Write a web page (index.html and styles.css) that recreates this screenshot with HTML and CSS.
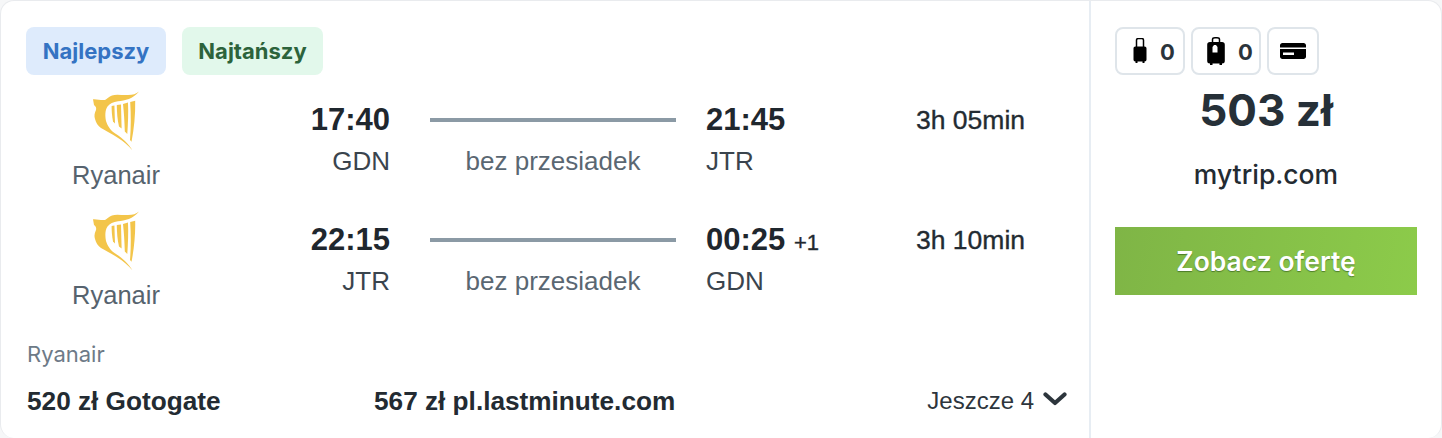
FILE: index.html
```html
<!DOCTYPE html>
<html lang="pl">
<head>
<meta charset="utf-8">
<title>Oferta lotu</title>
<link rel="stylesheet" href="styles.css">
</head>
<body>
<svg class="defs" width="0" height="0" aria-hidden="true">
  <symbol id="harp" viewBox="0 0 48 60">
    <path d="M47 .5C44 3 41 4 36 4C30 4.300 24 3 20 4.500C17 5.500 15 8 13 9C9 9.500 5 8 1 8.300L2 14C4 15.500 4.500 17 4 19C2.500 22 2 25 3 28C4 32 6 35 9 37C16 41 26 46 33 52C36 54.500 38.500 57 40.600 59.600C37 53 30 47 24 43C19 40 15.500 35 14 30C13 25 13 19 15.500 15.500C18 12.500 21 11 26 10.300C33 9.500 41 8 47 .5Z"/>
    <path d="M19.600 15L22.400 14.500L23 32.500L21 30.500C20 25 19.600 20 19.600 15Z"/>
    <path d="M24.800 14L29 13.500L29.600 37.500L27 35.500C25.500 29 24.800 21 24.800 14Z"/>
    <path d="M31 13L36 11.500C36.500 22 36 33 35.300 43L32.800 40.500C32.500 31 32 22 31 13Z"/>
    <path d="M38.200 11L43.200 9.800C43.500 24 42 38 39.500 50.800L38 49C39 37 39 24 38.200 11Z"/>
  </symbol>
</svg>
<main class="card">
  <section class="main">
    <div class="tags">
      <span class="tag tag-blue">Najlepszy</span>
      <span class="tag tag-green">Najtańszy</span>
    </div>
    <div class="leg">
      <div class="airline">
        <svg class="logo"><use href="#harp"/></svg>
        <span class="airline-name">Ryanair</span>
      </div>
      <div class="grid">
        <span class="time end">17:40</span>
        <span class="line"></span>
        <span class="time">21:45</span>
        <span class="duration">3h 05min</span>
        <span class="code end">GDN</span>
        <span class="stops">bez przesiadek</span>
        <span class="code">JTR</span>
      </div>
    </div>
    <div class="leg">
      <div class="airline">
        <svg class="logo"><use href="#harp"/></svg>
        <span class="airline-name">Ryanair</span>
      </div>
      <div class="grid">
        <span class="time end">22:15</span>
        <span class="line"></span>
        <span class="time">00:25 <small class="plus">+1</small></span>
        <span class="duration">3h 10min</span>
        <span class="code end">JTR</span>
        <span class="stops">bez przesiadek</span>
        <span class="code">GDN</span>
      </div>
    </div>
    <div class="carrier">Ryanair</div>
    <div class="others">
      <span class="other other-a">520 zł Gotogate</span>
      <span class="other other-b">567 zł pl.lastminute.com</span>
      <span class="more">Jeszcze 4
        <svg class="chev" viewBox="0 0 24 14"><path d="M2.500 2.500L12 11L21.500 2.500" fill="none" stroke="currentColor" stroke-width="4.200" stroke-linecap="round" stroke-linejoin="round"/></svg>
      </span>
    </div>
  </section>
  <aside class="side">
    <div class="bags">
      <span class="bag">
        <svg class="bag-icon" viewBox="0 0 14 26"><path d="M3.500 9V2.200C3.500 1 4.300 .5 5.200 .5H8.800C9.700 .5 10.500 1 10.500 2.200V9" fill="none" stroke="#000" stroke-width="1.500"/><path d="M2.500 8.500H11.500C12.800 8.500 13.500 9.300 13.500 10.500V21.500C13.500 22.800 12.800 23.500 11.500 23.500V25H9.500V23.500H4.500V25H2.500V23.500C1.200 23.500 .5 22.800 .5 21.500V10.500C.5 9.300 1.200 8.500 2.500 8.500Z"/></svg>
        <b>0</b>
      </span>
      <span class="bag">
        <svg class="bag-icon bag-big" viewBox="0 0 18 28"><path d="M5.500 6V2.500C5.500 1.300 6.500 .8 8 .8H10C11.500 .8 12.500 1.300 12.500 2.500V6" fill="none" stroke="#000" stroke-width="1.500"/><path d="M3 5H15C16.800 5 17.800 6 17.800 7.700V24C17.800 25.700 16.800 26.500 15 26.500V28H12.500V26.500H5.500V28H3V26.500C1.200 26.500 .2 25.700 .2 24V7.700C.2 6 1.200 5 3 5Z"/><path d="M5.500 10L7 8H9L10.500 10V15.500H5.500Z" fill="#fff"/></svg>
        <b>0</b>
      </span>
      <span class="bag bag-card">
        <svg class="card-icon" viewBox="0 0 26 16"><path fill-rule="evenodd" d="M2.500 0H23.500C25 0 26 1 26 2.500V13.500C26 15 25 16 23.500 16H2.500C1 16 0 15 0 13.500V2.500C0 1 1 0 2.500 0ZM0 4.500V6H26V4.500ZM3 9.500V12H14V9.500Z"/></svg>
      </span>
    </div>
    <div class="price">503 zł</div>
    <div class="seller">mytrip.com</div>
    <a class="cta">Zobacz ofertę</a>
  </aside>
</main>
</body>
</html>
```
FILE: styles.css
```css
* { box-sizing: border-box; }
html, body { margin: 0; padding: 0; background: #f6f7f8; }
body { width: 1442px; height: 438px; overflow: hidden; font-family: "Liberation Sans", Arial, sans-serif; color: #232b32; }
.defs { position: absolute; }
.card { display: flex; width: 1442px; height: 438px; background: #fff; border: 1px solid #e9ebee; border-bottom: 0; border-radius: 14px; overflow: hidden; }
.main { width: 1090px; padding: 26px 22px 0 25px; display: flex; flex-direction: column; border-right: 2px solid #e7edf3; }
.side { flex: 1; padding: 26px 24px 0 24px; }
.tags { display: flex; gap: 16px; height: 48px; }
.tag { height: 48px; border-radius: 8px; display: flex; align-items: center; justify-content: center; font-family: Inter, sans-serif; font-size: 22px; font-weight: 700; }
.tag-blue { width: 140px; background: #deebfc; color: #3473c3; }
.tag-green { width: 141px; background: #e2f8eb; color: #2c633b; }
.leg { display: flex; height: 120px; margin-top: 16px; }
.leg + .leg { margin-top: 0; }
.airline { width: 180px; display: flex; flex-direction: column; align-items: center; }
.logo { width: 48px; height: 60px; fill: #f3c54a; }
.airline-name { font-size: 25.500px; line-height: 28px; color: #56636e; margin-top: 10px; }
.grid { display: grid; grid-template-columns: 194px 246px 180px auto; column-gap: 30px; grid-template-rows: 40px 42px; padding-top: 9px; align-items: center; }
.time { font-size: 31px; font-weight: 700; color: #1f272e; white-space: nowrap; }
.time.end, .code.end { padding-right: 10px; }
.plus { font-size: 22px; font-weight: 400; -webkit-text-stroke: .4px #2a3239; }
.end { text-align: right; }
.line { height: 4px; background: #8b9aa5; }
.duration { font-size: 26.500px; color: #232b32; -webkit-text-stroke: .35px #232b32; }
.code { font-size: 26px; color: #3a444d; }
.stops { font-size: 26px; color: #5a6772; text-align: center; }
.carrier { font-family: Inter, sans-serif; font-size: 22px; color: #6d7a87; line-height: 28px; padding-top: 9px; padding-left: 1px; }
.others { display: flex; align-items: center; margin-top: 19px; height: 28px; padding-left: 1px; }
.other { font-size: 26.200px; font-weight: 700; color: #232b32; white-space: nowrap; }
.other-a { width: 347px; }
.more { margin-left: auto; display: flex; align-items: center; gap: 9px; font-size: 24px; color: #2d353c; }
.chev { width: 24px; height: 14px; margin-bottom: 4px; }
.bags { display: flex; gap: 6px; height: 48px; }
.bag { width: 70px; height: 48px; border: 2px solid #dfe5ea; border-radius: 8px; display: flex; align-items: center; justify-content: center; gap: 13px; padding-left: 8px; }
.bag b { font-family: Inter, sans-serif; font-size: 22px; font-weight: 700; color: #2b343b; margin-top: 2px; }
.bag-card { width: 52px; padding-left: 0; }
.bag-icon { width: 14px; height: 26px; }
.bag-big { width: 18px; height: 28px; }
.card-icon { width: 26px; height: 16px; }
.price { font-family: Inter, sans-serif; font-size: 44px; font-weight: 700; color: #263038; text-align: center; line-height: 54px; margin-top: 8px; }
.seller { font-family: Inter, sans-serif; font-size: 26.500px; font-weight: 500; color: #232b32; text-align: center; margin-top: 22px; line-height: 30px; }
.cta { display: flex; align-items: center; justify-content: center; height: 68px; margin-top: 38px; background: linear-gradient(100deg, #7fb546, #8ccb4a); color: #fff; font-family: Inter, sans-serif; font-size: 26.500px; font-weight: 600; text-shadow: 0 1px 1px rgba(40, 80, 20, .6); }
```
